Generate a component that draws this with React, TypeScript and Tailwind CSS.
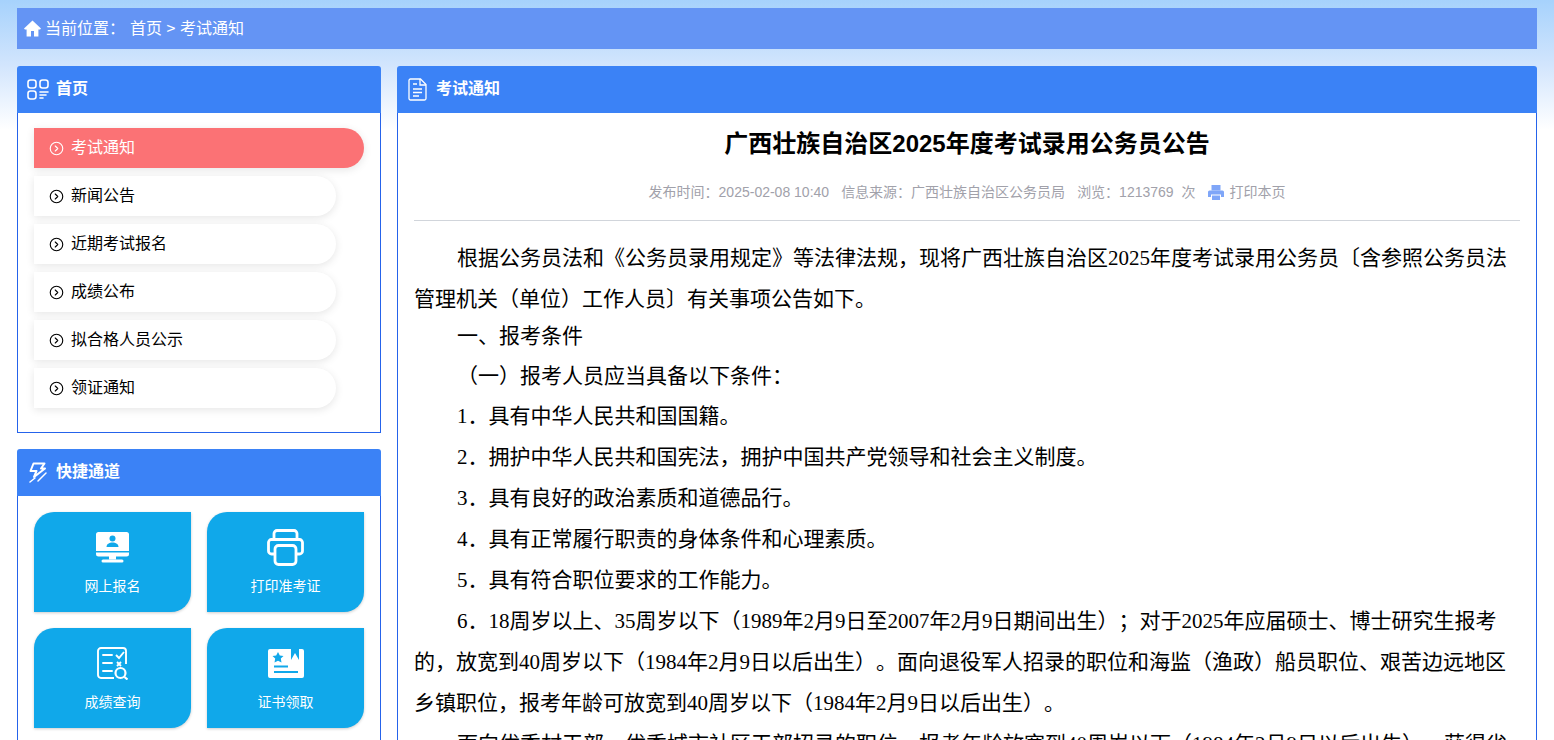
import React from "react";
import { CircleChevronRight } from "lucide-react";

const CJK = "font-['Noto_Sans_CJK_SC','Liberation_Sans',sans-serif]";

function HomeIcon() {
  return (
    <svg width="17" height="17" viewBox="0 0 17 17" fill="white">
      <path d="M8.500 0.500 L0 8.600 L0.900 9.600 L2.600 9.600 L2.600 16.500 L7 16.500 L7 11 L10 11 L10 16.500 L14.400 16.500 L14.400 9.600 L16.100 9.600 L17 8.600 Z" />
    </svg>
  );
}

function GridIcon() {
  return (
    <svg width="22" height="21" viewBox="0 0 22 21" fill="none" stroke="white" strokeWidth="1.600">
      <rect x="1" y="1" width="8" height="8" rx="2.500" />
      <rect x="13" y="1" width="8" height="8" rx="2.500" />
      <rect x="1" y="12" width="8" height="8" rx="2.500" />
      <path d="M13 13h8M13 16h6M13 19h3" strokeLinecap="round" />
    </svg>
  );
}

function BoltIcon() {
  return (
    <svg width="18" height="21" viewBox="0 0 18 21" fill="none" stroke="white" strokeWidth="2" strokeLinejoin="round">
      <path d="M4.500 1.500h11L12 6.500h4L5 15l2.500-6H1.500z" />
      <path d="M1 20l5-4M9 19l8-8" strokeLinecap="round" strokeWidth="1.500" />
    </svg>
  );
}

function DocIcon() {
  return (
    <svg className="-ml-px" width="19" height="23" viewBox="0 0 19 23" fill="none" stroke="white" strokeWidth="1.300">
      <path d="M2.500 1h10l5.500 5.500v14a1.500 1.500 0 0 1-1.500 1.500h-14a1.500 1.500 0 0 1-1.500-1.500v-18a1.500 1.500 0 0 1 1.500-1.500z" />
      <path d="M12 1v6h6" />
      <path d="M5 6h4M5 11h9M5 14.500h9M5 18h6" strokeWidth="1.500" />
    </svg>
  );
}

function SmallPrinter() {
  return (
    <svg width="16" height="15" viewBox="0 0 16 15" fill="#7fa6f8">
      <path d="M3.500 0h9v5.500h-9z" />
      <path d="M1.500 5.500h13A1.500 1.500 0 0 1 16 7v5h-3V9.500H3V12H0V7a1.500 1.500 0 0 1 1.500-1.500z" />
      <path d="M4 10.500h8V15H4z" />
    </svg>
  );
}

function MonitorIcon() {
  return (
    <svg width="33" height="31" viewBox="0 0 33 31" fill="white">
      <path d="M2.500 0h28A2.500 2.500 0 0 1 33 2.500V19H0V2.500A2.500 2.500 0 0 1 2.500 0z" />
      <path d="M0 20.500h33V22a2.500 2.500 0 0 1-2.500 2.500h-28A2.500 2.500 0 0 1 0 22z" />
      <path d="M13 24h7v3.500h-7z" />
      <rect x="5.500" y="27.500" width="22" height="3" rx="1.500" />
      <circle cx="16.500" cy="6.500" r="3" fill="#10a8ea" />
      <path d="M10.500 15c0-3 2.700-4.500 6-4.500s6 1.500 6 4.500z" fill="#10a8ea" />
    </svg>
  );
}

function BigPrinterIcon() {
  return (
    <svg width="37" height="37" viewBox="0 0 37 37" fill="none" stroke="white" strokeWidth="2.800" strokeLinejoin="round">
      <path d="M7 11V4.500A3 3 0 0 1 10 1.500h17a3 3 0 0 1 3 3V11" />
      <path d="M8 25H4.500a3 3 0 0 1-3-3V13.500a3 3 0 0 1 3-3h28a3 3 0 0 1 3 3V22a3 3 0 0 1-3 3H29" />
      <rect x="8" y="16.500" width="21" height="19" rx="3.500" />
    </svg>
  );
}

function ScoreIcon() {
  return (
    <svg width="31" height="33" viewBox="0 0 31 33" fill="none" stroke="white" strokeWidth="1.900">
      <path d="M17 31H4a3 3 0 0 1-3-3V4a3 3 0 0 1 3-3h22a3 3 0 0 1 3 3v13" />
      <path d="M6 8h9M6 16h9M6 24h9" strokeLinecap="round" />
      <path d="M19 8l3 3 5-6" />
      <path d="M20 15l4 4M24 15l-4 4" />
      <circle cx="23.500" cy="26" r="5" strokeWidth="2.200" />
      <path d="M27.500 30l3 2.500" strokeWidth="2.200" />
    </svg>
  );
}

function CertIcon() {
  return (
    <svg width="36" height="30" viewBox="0 0 36 30" fill="white">
      <path d="M2 1h21v11l4-7 4 7V1h3a2 2 0 0 1 2 2v25a2 2 0 0 1-2 2H2a2 2 0 0 1-2-2V3a2 2 0 0 1 2-2z" />
      <path d="M10 4l1.800 3.500 3.700.5-2.700 2.600.7 3.900L10 12.700l-3.500 1.800.7-3.900L4.500 8l3.700-.5z" fill="#10a8ea" />
      <rect x="6" y="17.500" width="14" height="2" fill="#10a8ea" />
      <rect x="6" y="23" width="24" height="2" fill="#10a8ea" />
    </svg>
  );
}

function PanelHead({ icon, title }: { icon: React.ReactNode; title: string }) {
  return (
    <div className="flex h-[47px] items-center rounded-t-[3px] bg-[#3b82f6] pl-[10px] text-white">
      <span className="flex w-[22px] justify-center">{icon}</span>
      <span className="ml-[7px] pb-[5px] text-[16px] font-bold">{title}</span>
    </div>
  );
}

const navItems = ["新闻公告", "近期考试报名", "成绩公布", "拟合格人员公示", "领证通知"];

const tiles: { label: string; icon: React.ReactNode }[] = [
  { label: "网上报名", icon: <MonitorIcon /> },
  { label: "打印准考证", icon: <BigPrinterIcon /> },
  { label: "成绩查询", icon: <ScoreIcon /> },
  { label: "证书领取", icon: <CertIcon /> },
];

const paragraphs: { text: string; cls?: string }[] = [
  { text: "根据公务员法和《公务员录用规定》等法律法规，现将广西壮族自治区2025年度考试录用公务员〔含参照公务员法管理机关（单位）工作人员〕有关事项公告如下。" },
  { text: "一、报考条件", cls: "-mt-[4px]" },
  { text: "（一）报考人员应当具备以下条件：", cls: "-mt-[1px]" },
  { text: "1．具有中华人民共和国国籍。", cls: "-mt-[1px]" },
  { text: "2．拥护中华人民共和国宪法，拥护中国共产党领导和社会主义制度。" },
  { text: "3．具有良好的政治素质和道德品行。" },
  { text: "4．具有正常履行职责的身体条件和心理素质。" },
  { text: "5．具有符合职位要求的工作能力。" },
  { text: "6．18周岁以上、35周岁以下（1989年2月9日至2007年2月9日期间出生）；对于2025年应届硕士、博士研究生报考的，放宽到40周岁以下（1984年2月9日以后出生）。面向退役军人招录的职位和海监（渔政）船员职位、艰苦边远地区乡镇职位，报考年龄可放宽到40周岁以下（1984年2月9日以后出生）。" },
  { text: "面向优秀村干部、优秀城市社区干部招录的职位，报考年龄放宽到40周岁以下（1984年2月9日以后出生）。获得省" },
];

export default function App() {
  return (
    <div className={`h-[740px] overflow-hidden bg-[linear-gradient(#a6d2fc_0px,#d2e5fd_65px,#ffffff_130px)] px-[17px] pt-2 ${CJK}`}>
      <div className="flex h-[41px] items-center bg-[#6494f4] pl-[7px] text-[16px] text-white">
        <HomeIcon />
        <span className="ml-[4px] pb-[3px]">当前位置：</span>
        <span className="ml-[5px] pb-[3px]">首页 <span className="mx-[1px]">&gt;</span> 考试通知</span>
      </div>

      <div className="mt-[17px] flex gap-4">
        <aside className="flex w-[364px] shrink-0 flex-col gap-4">
          <section>
            <PanelHead icon={<GridIcon />} title="首页" />
            <div className="flex h-[320px] flex-col items-start gap-2 border border-t-0 border-[#2563eb] bg-white px-4 pt-[15px]">
              <a className="flex h-10 w-[330px] items-center gap-[7px] rounded-r-[20px] bg-[#fb7275] pl-[15px] text-[16px] text-white shadow-[0_2px_8px_rgba(0,0,0,0.1)]">
                <CircleChevronRight size={15} strokeWidth={1.8} />
                <span className="pb-[5px]">考试通知</span>
              </a>
              {navItems.map((t) => (
                <a key={t} className="flex h-10 w-[302px] items-center gap-[7px] rounded-r-[20px] bg-white pl-[15px] text-[16px] text-black shadow-[0_2px_8px_rgba(0,0,0,0.1)]">
                  <CircleChevronRight size={15} strokeWidth={1.8} />
                  <span className="pb-[5px]">{t}</span>
                </a>
              ))}
            </div>
          </section>
          <section>
            <PanelHead icon={<BoltIcon />} title="快捷通道" />
            <div className="grid grid-cols-2 gap-4 border border-t-0 border-[#2563eb] bg-white p-4">
              {tiles.map((t) => (
                <a key={t.label} className="flex h-[100px] flex-col items-center rounded-tl-[20px] rounded-br-[20px] bg-[#10a8ea] text-[14px] text-white shadow-[0_1px_3px_rgba(0,0,0,0.2)]">
                  <span className="flex h-[66px] items-center justify-center pt-[4px]">{t.icon}</span>
                  <span className="-mt-[3px]">{t.label}</span>
                </a>
              ))}
            </div>
          </section>
        </aside>

        <main className="min-w-0 flex-1">
          <PanelHead icon={<DocIcon />} title="考试通知" />
          <div className="border border-t-0 border-[#2563eb] bg-white px-4 pb-10">
            <h1 className="pt-[13px] text-center text-[24px] font-bold leading-[36px] text-black font-['Liberation_Sans','Noto_Sans_CJK_SC',sans-serif]">广西壮族自治区2025年度考试录用公务员公告</h1>
            <div className="mt-[20px] flex h-[39px] items-start justify-center gap-[12px] border-b border-[#d1d5db] text-[14px] text-[#a1a1aa] font-['Liberation_Sans','Noto_Sans_CJK_SC',sans-serif]">
              <span>发布时间：2025-02-08 10:40</span>
              <span>信息来源：广西壮族自治区公务员局</span>
              <span>浏览：1213769&nbsp;&nbsp;次</span>
              <span className="flex items-center gap-[5px]"><span className="ml-px"><SmallPrinter /></span>打印本页</span>
            </div>
            <div className="pt-[17px] text-[21px] leading-[41px] text-black [text-spacing-trim:space-all] font-['Liberation_Serif','Noto_Sans_CJK_SC',serif]">
              {paragraphs.map((p, i) => (
                <p key={i} className={`indent-[43px] ${p.cls ?? ""}`}>{p.text}</p>
              ))}
            </div>
          </div>
        </main>
      </div>
    </div>
  );
}
